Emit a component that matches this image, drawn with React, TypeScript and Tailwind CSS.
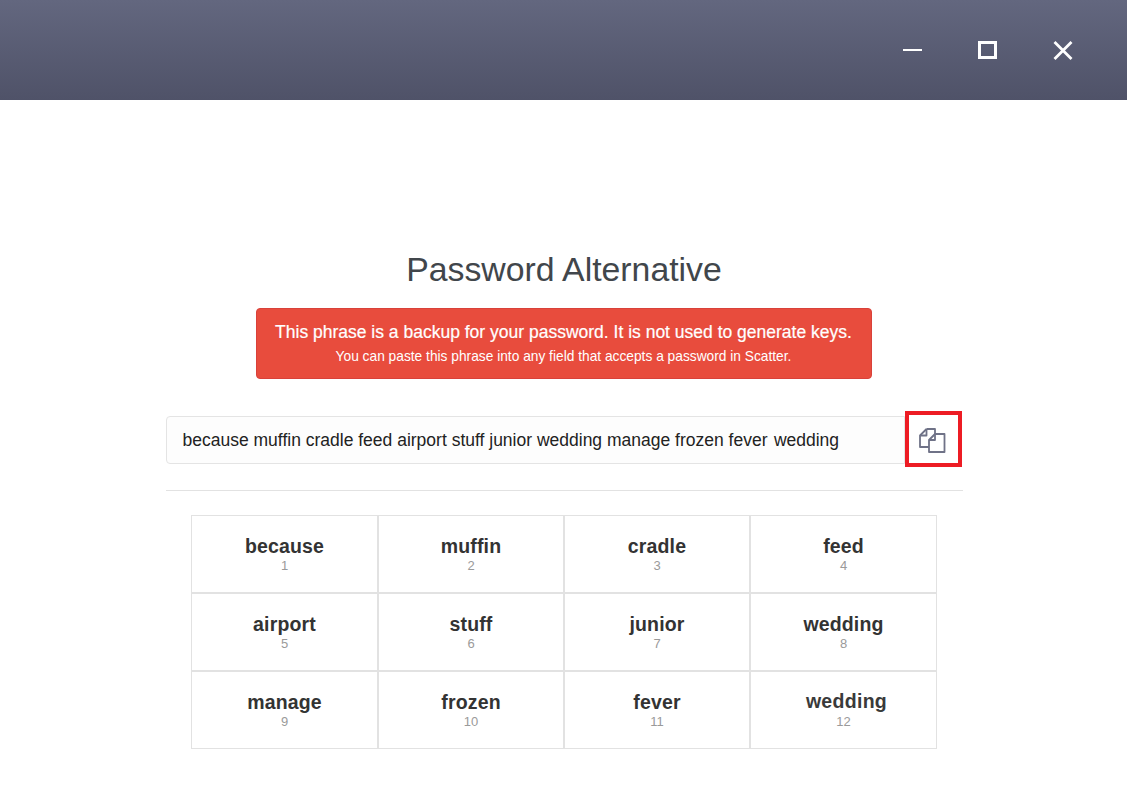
const words = ["because", "muffin", "cradle", "feed", "airport", "stuff", "junior", "wedding", "manage", "frozen", "fever", "wedding"];

export default function App() {
    return (
        <main className="min-h-[802px] bg-white font-['Liberation_Sans',Arial,sans-serif] text-[#3a3a3a]">
            {/* Title bar */}
            <div className="flex h-[100px] items-center justify-end bg-gradient-to-b from-[#63677f] to-[#4f5268] pr-[45px]">
                <div className="flex items-center gap-[37px]">
                    <svg width="38" height="38" viewBox="0 0 38 38" className="text-white">
                        <rect x="9" y="18" width="19" height="2" fill="currentColor" />
                    </svg>
                    <svg width="38" height="38" viewBox="0 0 38 38" className="text-white">
                        <rect x="10.5" y="11.5" width="16" height="15" fill="none" stroke="currentColor" strokeWidth="3" />
                    </svg>
                    <svg width="38" height="38" viewBox="0 0 38 38" className="text-white">
                        <path d="M10.5 11 L27.5 28 M27.5 11 L10.5 28" fill="none" stroke="currentColor" strokeWidth="2.8" />
                    </svg>
                </div>
            </div>

            <div className="flex flex-col items-center pt-[148px]">
                <h1 className="ml-[1px] text-[33.8px] leading-[42px] font-normal text-[#41464b]">Password Alternative</h1>

                <div className="mt-[18px] flex h-[71px] w-[616px] flex-col items-center justify-center rounded border border-[#d9413a] bg-[#e84c3d] text-white">
                    <p className="text-[17.5px] leading-[24px] [-webkit-text-stroke:0.2px_white]">This phrase is a backup for your password. It is not used to generate keys.</p>
                    <p className="mt-[2px] text-[13.75px] leading-[22px]">You can paste this phrase into any field that accepts a password in Scatter.</p>
                </div>

                {/* Phrase + copy */}
                <div className="mt-[32px] ml-[1px] flex w-[797px] items-start">
                    <div className="mt-[5px] flex h-[48px] w-[739.5px] items-center rounded-l border border-[#e4e4e4] bg-[#fdfdfd] pl-[16px] text-[17.5px] text-[#222]">
                        <span>because muffin cradle feed airport stuff junior wedding manage frozen fever</span>
                        <span className="ml-[6.4px]">wedding</span>
                    </div>
                    <div className="flex h-[56px] w-[57px] items-center justify-center border-[4px] border-[#ed1c24] bg-white">
                        <svg width="28" height="28" viewBox="0 0 28 28" fill="none" stroke="#6f7287" strokeWidth="1.8" strokeLinejoin="round" className="-translate-x-px">
                            <path d="M7.5 4 H16 V9 M7.5 4 L1 10.5 V22 H10" />
                            <path d="M7.5 4 V10.5 H1" />
                            <path d="M16 9 H25.5 V27 H10 V15 Z" fill="white" />
                            <path d="M16 9 V15 H10" />
                        </svg>
                    </div>
                </div>

                <div className="mt-[23px] ml-[1px] h-px w-[797px] bg-[#e2e2e2]" />

                <div className="mt-[24px] ml-[1px] grid w-[746px] grid-cols-[187px_186px_186px_187px]">
                    {words.map((word, i) => (
                        <div key={i} className="flex h-[78px] flex-col items-center justify-center border border-[#e2e2e2] pb-[1px]">
                            <span
                                className={
                                    i === 11
                                        ? "ml-[6px] -translate-y-px text-[19.5px] leading-[22px] font-semibold tracking-[0.3px] text-[#3a3a3a]"
                                        : "text-[19.5px] leading-[22px] font-bold tracking-[0.15px] text-[#333]"
                                }
                            >
                                {word}
                            </span>
                            <span className="mt-[2px] text-[13px] leading-[14px] text-[#9a9a9a]">{i + 1}</span>
                        </div>
                    ))}
                </div>
            </div>
        </main>
    );
}
